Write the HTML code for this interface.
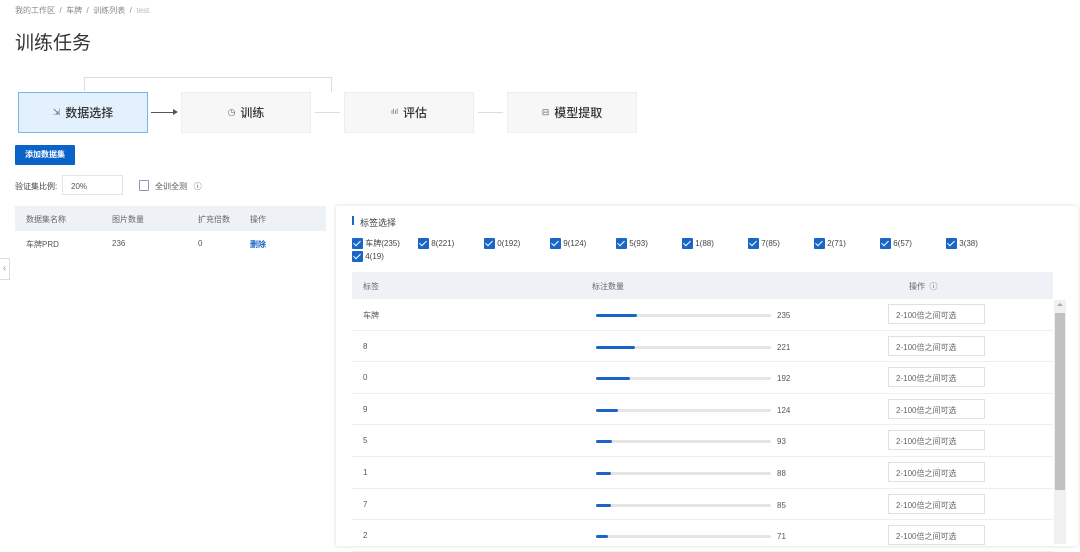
<!DOCTYPE html>
<html><head><meta charset="utf-8"><style>
*{box-sizing:border-box;margin:0;padding:0}
body{width:1080px;height:544px;overflow:hidden;background:#fff;font-family:"Liberation Sans","Noto Sans CJK SC",sans-serif;color:#333;position:relative;font-size:8px}
.a{position:absolute}
.bc{left:15px;top:5px;font-size:8px;color:#888}
.h1{left:15px;top:28px;font-size:19px;color:#333}
.step{height:41px;top:92px;background:#f7f7f7;border:1px solid #eee;font-size:12px;color:#333;display:flex;align-items:center;justify-content:center;gap:5px;font-weight:500}
.step i{font-style:normal;font-size:9px;color:#666}
.arr{height:1px;top:112px}
.cb{width:11px;height:11px;background:#1a66c8;border-radius:1px;display:inline-block;position:relative;vertical-align:middle}
.cb:after{content:"";position:absolute;left:3px;top:1px;width:3px;height:6px;border:solid #fff;border-width:0 1.5px 1.5px 0;transform:rotate(45deg)}
.lab{font-size:8px;color:#444}
.row{left:352px;width:701px;height:31.6px;border-bottom:1px solid #eee;font-size:8px;color:#555}
.row span{position:absolute;top:11px}
.row span.n{top:12px}
.trk{position:absolute;left:244px;top:15px;width:175px;height:3px;background:#e5e5e5;border-radius:2px}
.fill{height:3px;background:#1a66c8;border-radius:2px}
.inp{position:absolute;left:536px;top:5px;width:97px;height:20px;border:1px solid #e0e0e0;font-size:8px;color:#666;padding:5px 7px}
</style></head><body>
<div class="a bc">我的工作区 &nbsp;/&nbsp; 车牌 &nbsp;/&nbsp; 训练列表 &nbsp;/&nbsp; <span style="color:#bbb">test</span></div>
<div class="a h1">训练任务</div>
<div class="a" style="left:84px;top:77px;width:248px;height:1px;background:#ddd"></div>
<div class="a" style="left:84px;top:77px;width:1px;height:14px;background:#ddd"></div>
<div class="a" style="left:331px;top:77px;width:1px;height:15px;background:#ddd"></div>
<div class="a step" style="left:18px;width:130px;background:#e3f0fd;border:1px solid #7bb3ea"><i>⇲</i> 数据选择</div>
<div class="a arr" style="left:151px;width:25px;background:#555"></div><div class="a" style="left:173px;top:109px;border-left:5px solid #555;border-top:3px solid transparent;border-bottom:3px solid transparent"></div>
<div class="a step" style="left:181px;width:130px"><i>◷</i> 训练</div>
<div class="a arr" style="left:315px;width:25px;background:#ddd"></div>
<div class="a step" style="left:344px;width:130px"><i style="font-size:7px">ılıl</i> 评估</div>
<div class="a arr" style="left:478px;width:25px;background:#ddd"></div>
<div class="a step" style="left:507px;width:130px"><i>⊟</i> 模型提取</div>
<div class="a" style="left:15px;top:145px;width:60px;height:20px;background:#0a63c9;color:#fff;font-size:8px;font-weight:bold;text-align:center;line-height:20px;border-radius:1px">添加数据集</div>
<div class="a lab" style="left:15px;top:181px">验证集比例:</div>
<div class="a" style="left:62px;top:175px;width:61px;height:20px;border:1px solid #e5e5e5;font-size:8px;color:#555;padding:6px 8px">20%</div>
<div class="a" style="left:139px;top:180px;width:10px;height:11px;border:1px solid #8a9bb0;border-radius:1px"></div>
<div class="a lab" style="left:155px;top:181px;color:#555">全训全测 &nbsp; ⓘ</div>
<div class="a" style="left:15px;top:206px;width:311px;height:25px;background:#eef1f6"></div>
<div class="a lab" style="left:26px;top:214px;color:#666">数据集名称</div>
<div class="a lab" style="left:112px;top:214px;color:#666">图片数量</div>
<div class="a lab" style="left:198px;top:214px;color:#666">扩充倍数</div>
<div class="a lab" style="left:250px;top:214px;color:#666">操作</div>
<div class="a lab" style="left:26px;top:239px;color:#555">车牌PRD</div>
<div class="a lab" style="left:112px;top:239px;color:#555">236</div>
<div class="a lab" style="left:198px;top:239px;color:#555">0</div>
<div class="a lab" style="left:250px;top:239px;color:#1a66c8;font-weight:bold">删除</div>
<div class="a" style="left:0;top:258px;width:10px;height:22px;border:1px solid #ddd;border-left:none;color:#999;font-size:10px;line-height:20px;text-align:center">‹</div>
<div class="a" style="left:336px;top:206px;width:742px;height:340px;background:#fff;box-shadow:0 0 4px rgba(0,0,0,.15)"></div>
<div class="a" style="left:352px;top:216px;width:2px;height:9px;background:#1a66c8"></div>
<div class="a" style="left:360px;top:216px;font-size:9px;color:#444">标签选择</div>
<div class="a lab" style="left:352px;top:237px;width:700px;line-height:14px">
<span style="position:absolute;left:0"><i class="cb"></i> 车牌(235)</span>
<span style="position:absolute;left:66px"><i class="cb"></i> 8(221)</span>
<span style="position:absolute;left:132px"><i class="cb"></i> 0(192)</span>
<span style="position:absolute;left:198px"><i class="cb"></i> 9(124)</span>
<span style="position:absolute;left:264px"><i class="cb"></i> 5(93)</span>
<span style="position:absolute;left:330px"><i class="cb"></i> 1(88)</span>
<span style="position:absolute;left:396px"><i class="cb"></i> 7(85)</span>
<span style="position:absolute;left:462px"><i class="cb"></i> 2(71)</span>
<span style="position:absolute;left:528px"><i class="cb"></i> 6(57)</span>
<span style="position:absolute;left:594px"><i class="cb"></i> 3(38)</span>
<span style="position:absolute;left:0;top:13px"><i class="cb"></i> 4(19)</span>
</div>
<div class="a" style="left:352px;top:272px;width:701px;height:27px;background:#eef1f6"></div>
<div class="a lab" style="left:363px;top:281px;color:#666">标签</div>
<div class="a lab" style="left:592px;top:281px;color:#666">标注数量</div>
<div class="a lab" style="left:909px;top:281px;color:#666">操作 &nbsp;ⓘ</div>
<div class="a row" style="top:299px"><span style="left:11px">车牌</span><div class="trk"><div class="fill" style="width:41px"></div></div><span class="n" style="left:425px">235</span><div class="inp">2-100倍之间可选</div></div>
<div class="a row" style="top:330.6px"><span style="left:11px">8</span><div class="trk"><div class="fill" style="width:39px"></div></div><span class="n" style="left:425px">221</span><div class="inp">2-100倍之间可选</div></div>
<div class="a row" style="top:362.2px"><span style="left:11px">0</span><div class="trk"><div class="fill" style="width:34px"></div></div><span class="n" style="left:425px">192</span><div class="inp">2-100倍之间可选</div></div>
<div class="a row" style="top:393.8px"><span style="left:11px">9</span><div class="trk"><div class="fill" style="width:22px"></div></div><span class="n" style="left:425px">124</span><div class="inp">2-100倍之间可选</div></div>
<div class="a row" style="top:425.4px"><span style="left:11px">5</span><div class="trk"><div class="fill" style="width:16px"></div></div><span class="n" style="left:425px">93</span><div class="inp">2-100倍之间可选</div></div>
<div class="a row" style="top:457px"><span style="left:11px">1</span><div class="trk"><div class="fill" style="width:15px"></div></div><span class="n" style="left:425px">88</span><div class="inp">2-100倍之间可选</div></div>
<div class="a row" style="top:488.6px"><span style="left:11px">7</span><div class="trk"><div class="fill" style="width:15px"></div></div><span class="n" style="left:425px">85</span><div class="inp">2-100倍之间可选</div></div>
<div class="a row" style="top:520.2px"><span style="left:11px">2</span><div class="trk"><div class="fill" style="width:12px"></div></div><span class="n" style="left:425px">71</span><div class="inp">2-100倍之间可选</div></div>
<div class="a" style="left:1054px;top:300px;width:12px;height:244px;background:#f1f1f1"></div>
<div class="a" style="left:1057px;top:303px;border-bottom:3px solid #aaa;border-left:3px solid transparent;border-right:3px solid transparent"></div>
<div class="a" style="left:1055px;top:313px;width:10px;height:177px;background:#c1c1c1"></div>
</body></html>
